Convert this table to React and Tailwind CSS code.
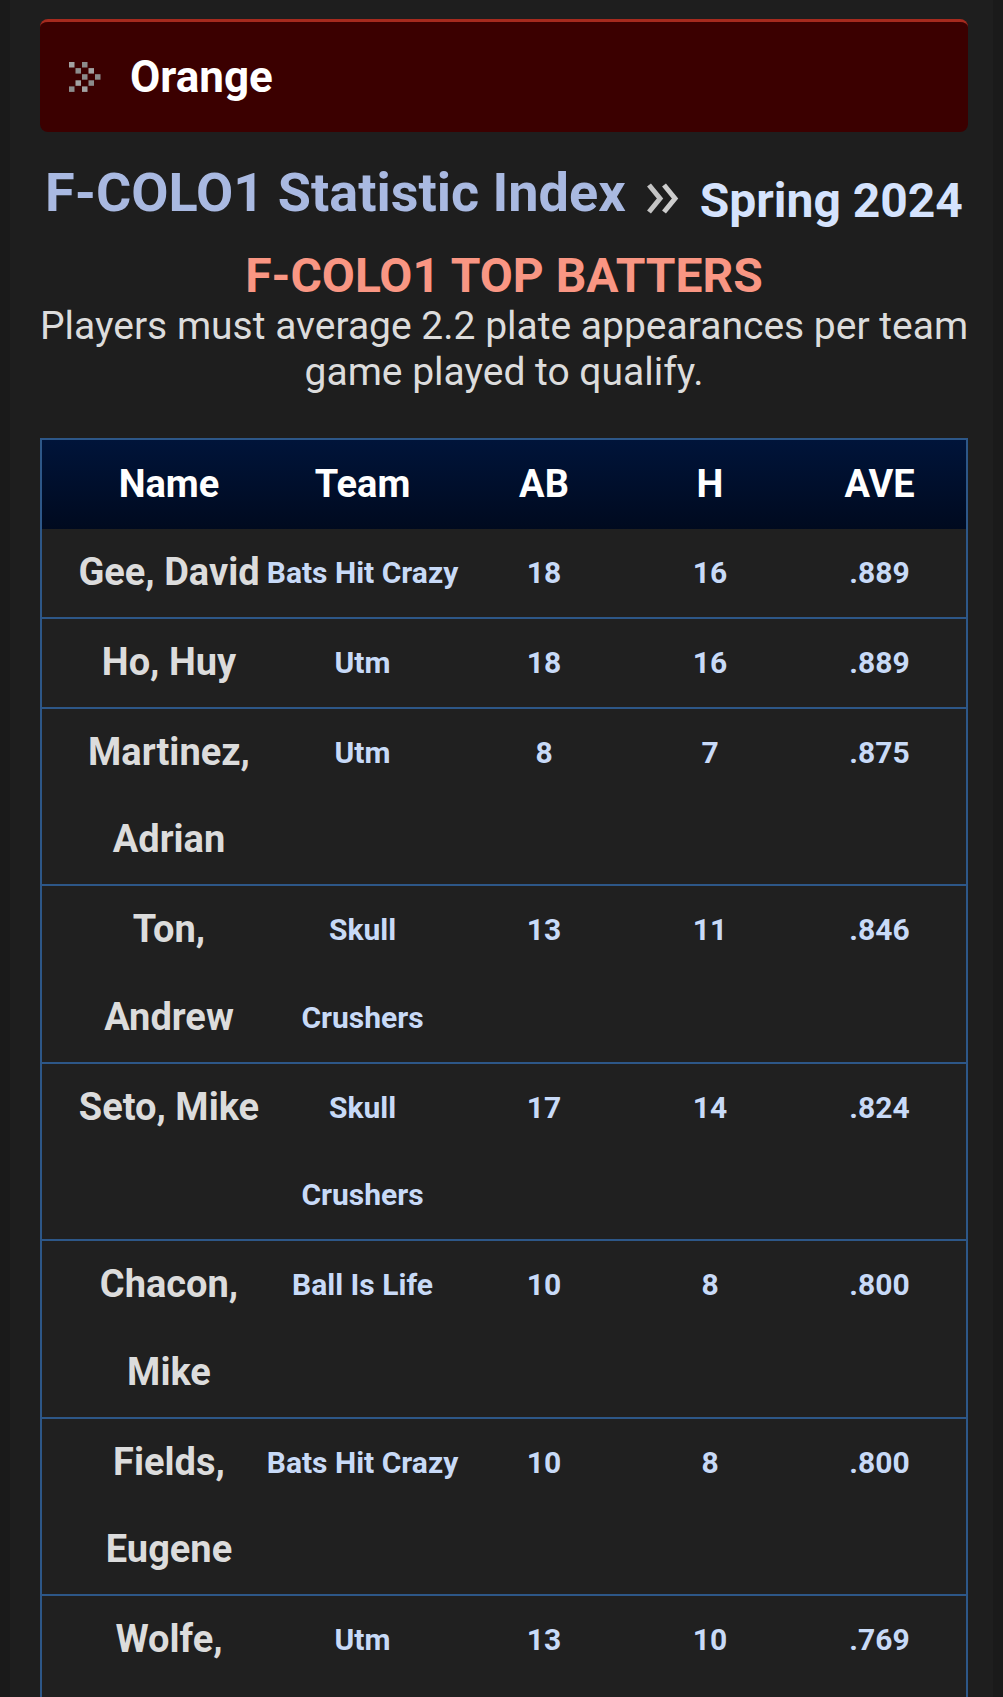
const ROWS = [
  { name: ["Gee, David"], team: ["Bats Hit Crazy"], ab: 18, h: 16, ave: ".889" },
  { name: ["Ho, Huy"], team: ["Utm"], ab: 18, h: 16, ave: ".889" },
  { name: ["Martinez,", "Adrian"], team: ["Utm"], ab: 8, h: 7, ave: ".875" },
  { name: ["Ton,", "Andrew"], team: ["Skull", "Crushers"], ab: 13, h: 11, ave: ".846" },
  { name: ["Seto, Mike"], team: ["Skull", "Crushers"], ab: 17, h: 14, ave: ".824" },
  { name: ["Chacon,", "Mike"], team: ["Ball Is Life"], ab: 10, h: 8, ave: ".800" },
  { name: ["Fields,", "Eugene"], team: ["Bats Hit Crazy"], ab: 10, h: 8, ave: ".800" },
  { name: ["Wolfe,"], team: ["Utm"], ab: 13, h: 10, ave: ".769", tall: true },
];

// pixel-art double chevron in the banner
const PixelChevrons = () => {
  const shape = [0, 1, 2, 1, 0];
  const cells = [];
  shape.forEach((c, r) => {
    cells.push([c, r]);
    cells.push([c + 2, r]);
  });
  return (
    <svg width="32" height="30" viewBox="0 0 32 30" className="shrink-0">
      {cells.map(([c, r], i) => (
        <rect
          key={i}
          x={c * 6.5}
          y={r * 6.1}
          width="5.5"
          height="5.5"
          fill={i % 3 === 0 ? "#a2a2a2" : "#8c8c8c"}
        />
      ))}
    </svg>
  );
};

const Chevrons = () => (
  <svg width="34" height="33" viewBox="0 0 34 33" className="shrink-0 mt-[16px]">
    <polyline points="3,3 14,16.5 3,30" fill="none" stroke="#c4c4c4" strokeWidth="5" />
    <polyline points="18,3 29,16.5 18,30" fill="none" stroke="#cdcdcd" strokeWidth="5" />
  </svg>
);

const Lines = ({ lines, className }) => (
  <div className={className}>
    {lines.map((l, i) => (
      <div key={i} className="whitespace-nowrap leading-[87.75px]">
        {l}
      </div>
    ))}
  </div>
);

export default function App() {
  return (
    <div
      className="min-h-screen bg-[#1a1a1a] px-[10px]"
      style={{ fontFamily: "Roboto, 'Noto Sans', sans-serif" }}
    >
      <div className="bg-[#1e1e1e] pl-[30px] pr-[25px] pt-[19px] min-h-screen">
        {/* Banner */}
        <div className="h-[113px] rounded-lg bg-[#3b0000] border-t-[3px] border-[#a62a1e] flex items-center pl-[29px] gap-[29px]">
          <PixelChevrons />
          <span className="text-[44px] font-bold text-white leading-none">Orange</span>
        </div>

        {/* Title */}
        <div className="mt-[34px] flex justify-center items-start gap-[20px]">
          <span className="text-[54px] leading-none font-bold text-[#a9b9e1] whitespace-nowrap">
            F-COLO1 Statistic Index
          </span>
          <Chevrons />
          <span className="mt-[11px] text-[48px] leading-none font-bold text-[#d5e3fd] whitespace-nowrap">
            Spring 2024
          </span>
        </div>

        <h2 className="mt-[27px] text-center text-[48px] leading-none font-bold text-[#f99683]">
          F-COLO1 TOP BATTERS
        </h2>
        <p className="mt-[3px] text-center text-[39px] leading-[46px] text-[#dcdcdc] whitespace-nowrap">
          Players must average 2.2 plate appearances per team
          <br />
          game played to qualify.
        </p>

        {/* Table */}
        <div className="mt-[43px] border-2 border-[#2d5788]">
          <div className="h-[89px] bg-gradient-to-b from-[#00143a] to-[#000a1f] pl-8 grid grid-cols-[190px_197px_166px_166px_1fr] items-center text-center text-[38px] font-bold text-white">
            <span>Name</span>
            <span>Team</span>
            <span>AB</span>
            <span>H</span>
            <span>AVE</span>
          </div>
          {ROWS.map((r, i) => (
            <div
              key={i}
              className={`bg-[#202020] pl-8 grid grid-cols-[190px_197px_166px_166px_1fr] items-start text-center ${
                r.tall ? "min-h-[176px]" : "border-b-2 border-[#2d5788]"
              }`}
            >
              <Lines lines={r.name} className="text-[38px] font-bold text-[#dcdcdc]" />
              <Lines lines={r.team} className="text-[30px] font-bold text-[#c8daf7]" />
              <Lines lines={[r.ab]} className="text-[30px] font-bold text-[#c8daf7]" />
              <Lines lines={[r.h]} className="text-[30px] font-bold text-[#c8daf7]" />
              <Lines lines={[r.ave]} className="text-[30px] font-bold text-[#c8daf7]" />
            </div>
          ))}
        </div>
      </div>
    </div>
  );
}
